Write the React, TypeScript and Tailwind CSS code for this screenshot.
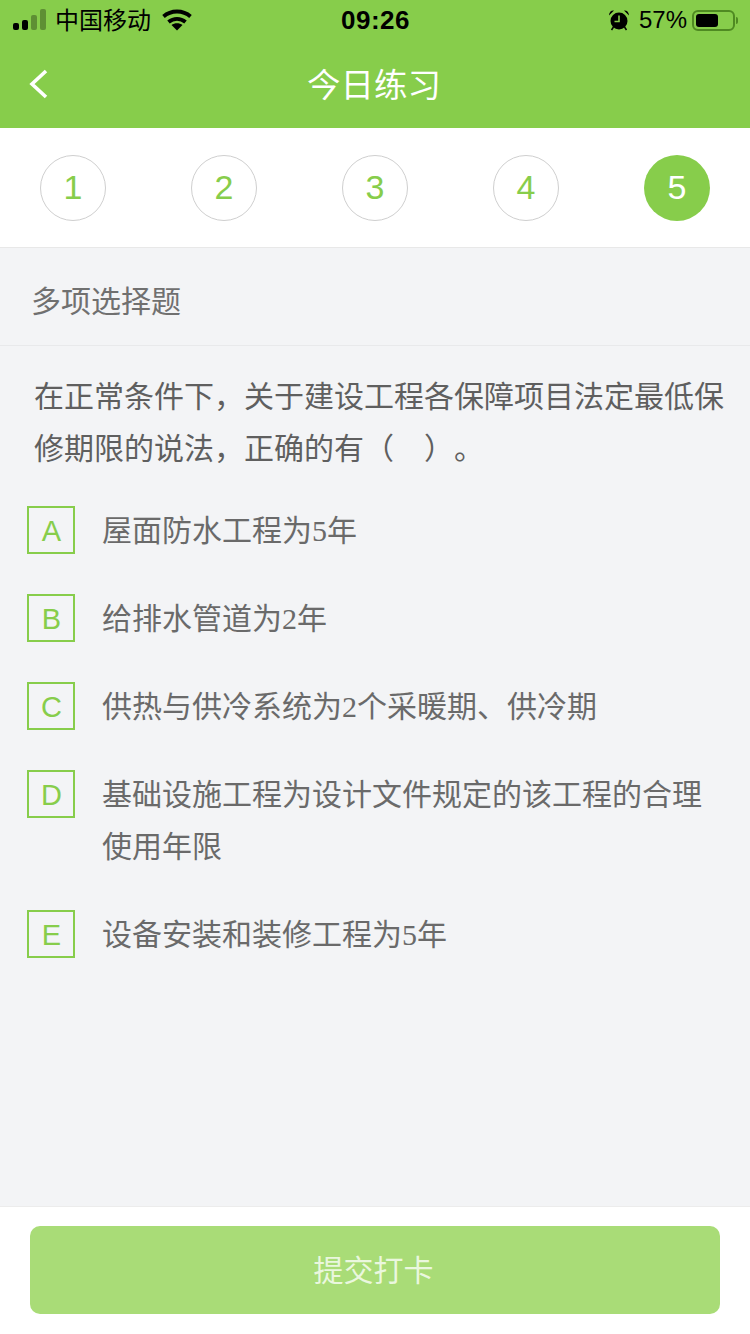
const CJK = "font-['Noto_Sans_CJK_SC','Noto_Sans',sans-serif]";

const steps = [1, 2, 3, 4, 5];

type Option = { key: string; text: React.ReactNode };

const Num = ({ children }: { children: string }) => (
  <span className="font-['Liberation_Serif',serif] leading-none">{children}</span>
);

const options: Option[] = [
  { key: "A", text: <>屋面防水工程为<Num>5</Num>年</> },
  { key: "B", text: <>给排水管道为<Num>2</Num>年</> },
  { key: "C", text: <>供热与供冷系统为<Num>2</Num>个采暖期、供冷期</> },
  { key: "D", text: "基础设施工程为设计文件规定的该工程的合理使用年限" },
  { key: "E", text: <>设备安装和装修工程为<Num>5</Num>年</> },
];

const SignalIcon = () => (
  <svg width="34" height="22" viewBox="0 0 34 22" fill="currentColor">
    <rect x="0" y="14" width="6" height="7" rx="2" />
    <rect x="9" y="11" width="6" height="10" rx="2" />
    <rect x="18" y="6" width="6" height="15" rx="2" opacity="0.3" />
    <rect x="27" y="0" width="6" height="21" rx="2" opacity="0.3" />
  </svg>
);

const WifiIcon = () => (
  <svg width="30" height="22" viewBox="0 0 30 22" fill="none" stroke="currentColor" strokeWidth="3.800">
    <path d="M1.500 7.500C9 .8 21 .8 28.500 7.500" />
    <path d="M6.500 13c5-4.300 12-4.300 17 0" />
    <path d="M15 21.500l-5.500-5.500c3-2.500 8-2.500 11 0z" fill="currentColor" stroke="none" />
  </svg>
);

const AlarmIcon = () => (
  <svg width="22" height="22" viewBox="0 0 22 22" fill="currentColor">
    <circle cx="11" cy="12" r="8.500" />
    <path d="M1 6.500C1 3 3.500 1 6 1.500zM21 6.500C21 3 18.500 1 16 1.500z" />
    <path d="M3.500 21l2-3M18.500 21l-2-3" stroke="currentColor" strokeWidth="1.500" />
    <path d="M11 6.500V12.500H6.500" fill="none" stroke="#87cd4b" strokeWidth="1.600" />
  </svg>
);

const BatteryIcon = () => (
  <div className="flex items-center gap-[1px]">
    <div className="h-[21px] w-[43px] rounded-[6px] border-2 border-[#4f8a22] p-[2px]">
      <div className="h-full w-[22px] rounded-[3px] bg-black" />
    </div>
    <div className="h-[7px] w-[2px] rounded-r-sm bg-[#4f8a22]" />
  </div>
);

export default function App() {
  return (
    <div className={`flex h-[1334px] w-[750px] flex-col overflow-hidden bg-[#f3f4f6] ${CJK}`}>
      <header className="h-[128px] shrink-0 bg-[#87cd4b]">
        <div className="flex h-[40px] items-center pl-[13px] pr-[12px] text-black">
          <div className="flex flex-1 items-center">
            <SignalIcon />
            <span className="ml-[8px] pb-[2px] text-[24px] leading-none">中国移动</span>
            <span className="ml-[11px] flex"><WifiIcon /></span>
          </div>
          <span className="font-['Liberation_Sans',sans-serif] text-[26px] font-bold leading-none tracking-[0.5px]">09:26</span>
          <div className="flex flex-1 items-center justify-end">
            <AlarmIcon />
            <span className="ml-[9px] font-['Liberation_Sans',sans-serif] text-[24px] leading-none">57%</span>
            <span className="ml-[5px]"><BatteryIcon /></span>
          </div>
        </div>
        <div className="relative flex h-[88px] items-center justify-center pb-[2px] pr-[2px]">
          <svg className="absolute left-[28px] top-[28px]" width="22" height="32" viewBox="0 0 22 32" fill="none" stroke="white" strokeWidth="3.600">
            <path d="M18 3L4 16l14 13" />
          </svg>
          <h1 className="text-[33.500px] font-normal leading-none text-white">今日练习</h1>
        </div>
      </header>

      <div className="flex h-[120px] shrink-0 items-center justify-between border-b border-[#e8e8e8] bg-white px-[40px]">
        {steps.map((n) => (
          <div
            key={n}
            className={
              n === 5
                ? "flex h-[66px] w-[66px] items-center justify-center rounded-full bg-[#87cd4b] font-['Liberation_Sans',sans-serif] text-[34px] text-white"
                : "flex h-[66px] w-[66px] items-center justify-center rounded-full border border-[#cfcfcf] font-['Liberation_Sans',sans-serif] text-[34px] text-[#87cd4b]"
            }
          >
            {n}
          </div>
        ))}
      </div>

      <main className="flex-1">
        <div className="flex h-[98px] items-center border-b border-[#e8e9eb] pl-[31px] pt-[4px] text-[30px] leading-none text-[#707070]">
          多项选择题
        </div>
        <p className="pl-[34px] pr-[20px] pt-[22px] text-[30px] leading-[52px] text-[#5f5f5f] [text-spacing-trim:space-all]">
          在正常条件下，关于建设工程各保障项目法定最低保修期限的说法，正确的有（　）。
        </p>
        <ul className="flex flex-col gap-[36px] pl-[27px] pr-[40px] pt-[30px]">
          {options.map((o) => (
            <li key={o.key} className="flex items-start gap-[27px]">
              <span className="mt-[4px] flex h-[48px] w-[48px] shrink-0 items-center justify-center border-2 border-[#87cd4b] pl-[1px] pt-[2px] font-['Liberation_Sans',sans-serif] text-[29px] font-normal leading-none text-[#87cd4b]">
                {o.key}
              </span>
              <span className="text-[30px] leading-[52px] text-[#6a6a6a]">{o.text}</span>
            </li>
          ))}
        </ul>
      </main>

      <footer className="h-[128px] shrink-0 border-t border-[#ececec] bg-white px-[30px] pt-[19px]">
        <button className="flex h-[88px] w-full items-center justify-center rounded-[10px] bg-[#a9dc77] pb-[4px] pr-[3px] text-[30px] text-[#eaf7de]">
          提交打卡
        </button>
      </footer>
    </div>
  );
}
